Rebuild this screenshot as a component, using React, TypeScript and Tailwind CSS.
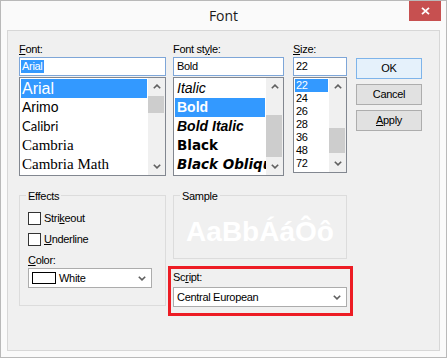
import React from "react";

function Up() {
  return (
    <svg width="8" height="5" viewBox="0 0 8 5" className="block">
      <path d="M0.8 4.3 L4 1.1 L7.2 4.3" fill="none" stroke="#606060" strokeWidth="1.6" />
    </svg>
  );
}
function Down() {
  return (
    <svg width="8" height="5" viewBox="0 0 8 5" className="block">
      <path d="M0.8 0.7 L4 3.9 L7.2 0.7" fill="none" stroke="#606060" strokeWidth="1.6" />
    </svg>
  );
}

function Scrollbar({ thumb }: { thumb: string }) {
  return (
    <div className="w-[17px] h-full flex flex-col bg-[#f0f0f0] shrink-0">
      <div className="h-[17px] shrink-0 flex items-center justify-center">
        <Up />
      </div>
      <div className="flex-1 pt-[1px]">
        <div className={thumb + " bg-[#cdcdcd] mr-[1px]"} />
      </div>
      <div className="h-[17px] shrink-0 flex items-center justify-center">
        <Down />
      </div>
    </div>
  );
}

const fontRows = [
  { t: "Arial", c: "font-['Liberation_Sans',sans-serif] text-[16px]", sel: true },
  { t: "Arimo", c: "font-['Liberation_Sans',sans-serif] text-[14px]" },
  { t: "Calibri", c: "font-['Lato',sans-serif] text-[13px]" },
  { t: "Cambria", c: "font-['Liberation_Serif',serif] text-[15px]" },
  { t: "Cambria Math", c: "font-['Liberation_Serif',serif] text-[15px]" },
];

const styleRows = [
  { t: "Italic", c: "font-['Liberation_Sans',sans-serif] text-[14px] italic" },
  { t: "Bold", c: "font-['Liberation_Sans',sans-serif] text-[14px] font-bold", sel: true },
  { t: "Bold Italic", c: "font-['Liberation_Sans',sans-serif] text-[14px] font-bold italic" },
  { t: "Black", c: "font-['DejaVu_Sans',sans-serif] text-[13.5px] font-bold" },
  { t: "Black Oblique", c: "font-['DejaVu_Sans',sans-serif] text-[13.5px] font-bold italic" },
];

const sizes = ["22", "24", "26", "28", "36", "48", "72"];

function Label({ pre, u, post }: { pre?: string; u: string; post?: string }) {
  return (
    <div className="h-[13px] leading-[13px] whitespace-nowrap">
      {pre}
      <span className="underline underline-offset-[1px]">{u}</span>
      {post}
    </div>
  );
}

export default function App() {
  return (
    <div className="w-[447px] h-[358px] bg-[#fafafa] border border-[#b9b9b9] flex flex-col overflow-hidden font-['Liberation_Sans',Arial,sans-serif] text-[11px] tracking-[-0.3px] text-black">
      {/* title bar */}
      <div className="h-[29px] shrink-0 relative flex items-center justify-center">
        <span className="font-['Open_Sans',sans-serif] text-[14px] tracking-normal text-[#1b1b1b]">Font</span>
        <div className="absolute top-0 right-[5px] w-[32px] h-[20px] bg-[#c75050] flex items-center justify-center">
          <svg width="9" height="8" viewBox="0 0 9 8">
            <path d="M1 0.8 L8 7.2 M8 0.8 L1 7.2" stroke="#fff" strokeWidth="1.8" />
          </svg>
        </div>
      </div>

      {/* client */}
      <div className="mx-[6px] h-[321px] shrink-0 border border-[#d7d7d7] bg-[#f0f0f0] flex flex-col">
        {/* top row */}
        <div className="flex items-start pt-[12px] pl-[11px]">
          {/* Font column */}
          <div className="w-[147px] flex flex-col">
            <Label u="F" post="ont:" />
            <div className="mt-[1px] h-[19px] bg-white border border-[#7ea6d8] flex items-center pl-[1px]">
              <span className="bg-[#3399ff] text-white h-[13px] leading-[13px] px-[1px]">Arial</span>
            </div>
            <div className="mt-[1px] h-[99px] bg-white border border-[#828790] flex overflow-hidden">
              <div className="flex-1 p-[1px] overflow-hidden">
                {fontRows.map((r) => (
                  <div
                    key={r.t}
                    className={
                      "h-[19px] leading-[19px] pl-[1px] whitespace-nowrap tracking-normal " +
                      r.c +
                      (r.sel ? " bg-[#3399ff] text-white" : " text-black")
                    }
                  >
                    {r.t}
                  </div>
                ))}
              </div>
              <Scrollbar thumb="h-[17px]" />
            </div>
          </div>

          {/* Font style column */}
          <div className="w-[111px] ml-[7px] flex flex-col">
            <Label pre="Font st" u="y" post="le:" />
            <div className="mt-[1px] h-[19px] bg-white border border-[#7ea6d8] flex items-center pl-[3px]">
              Bold
            </div>
            <div className="mt-[1px] h-[99px] bg-white border border-[#828790] flex overflow-hidden">
              <div className="flex-1 p-[1px] overflow-hidden">
                {styleRows.map((r) => (
                  <div
                    key={r.t}
                    className={
                      "h-[19px] leading-[19px] pl-[2px] whitespace-nowrap tracking-normal " +
                      r.c +
                      (r.sel ? " bg-[#3399ff] text-white" : " text-black")
                    }
                  >
                    {r.t}
                  </div>
                ))}
              </div>
              <Scrollbar thumb="mt-[19px] h-[42px]" />
            </div>
          </div>

          {/* Size column */}
          <div className="w-[54px] ml-[9px] flex flex-col">
            <Label u="S" post="ize:" />
            <div className="mt-[1px] h-[19px] bg-white border border-[#7ea6d8] flex items-center pl-[2px]">
              22
            </div>
            <div className="mt-[1px] h-[96px] bg-white border border-[#828790] flex overflow-hidden">
              <div className="flex-1 p-[1px] overflow-hidden">
                {sizes.map((s, i) => (
                  <div
                    key={s}
                    className={
                      "h-[13px] leading-[13px] pl-[1px] " +
                      (i === 0 ? "bg-[#3399ff] text-white" : "text-black")
                    }
                  >
                    {s}
                  </div>
                ))}
              </div>
              <Scrollbar thumb="mt-[32px] h-[25px]" />
            </div>
          </div>

          {/* Buttons */}
          <div className="w-[66px] ml-[9px] pt-[15px] flex flex-col gap-[5px]">
            <div className="h-[21px] bg-[#e5f1fb] border border-[#7eb4ea] flex items-center justify-center">
              OK
            </div>
            <div className="h-[21px] bg-[#e1e1e1] border border-[#adadad] flex items-center justify-center">
              Cancel
            </div>
            <div className="h-[21px] bg-[#e1e1e1] border border-[#adadad] flex items-center justify-center">
              <span className="underline underline-offset-[1px]">A</span>pply
            </div>
          </div>
        </div>

        {/* bottom row */}
        <div className="flex items-start mt-[19px] pl-[11px]">
          {/* Effects */}
          <div className="w-[147px] h-[111px] border border-[#dcdcdc] relative pt-[16px] pl-[8px]">
            <div className="absolute left-[6px] top-[-6px] px-[2px] bg-[#f0f0f0] h-[13px] leading-[13px]">
              Effects
            </div>
            <div className="flex items-center h-[13px]">
              <div className="w-[13px] h-[13px] bg-white border border-[#333333]" />
              <div className="ml-[3px] leading-[13px]">
                Stri<span className="underline underline-offset-[1px]">k</span>eout
              </div>
            </div>
            <div className="flex items-center h-[13px] mt-[8px]">
              <div className="w-[13px] h-[13px] bg-white border border-[#333333]" />
              <div className="ml-[3px] leading-[13px]">
                <span className="underline underline-offset-[1px]">U</span>nderline
              </div>
            </div>
            <div className="mt-[8px]">
              <Label u="C" post="olor:" />
            </div>
            <div className="mt-[1px] w-[124px] h-[20px] bg-white border border-[#acacac] flex items-center pl-[3px] pr-[5px]">
              <div className="w-[24px] h-[12px] border border-black bg-white" />
              <span className="ml-[3px] flex-1">White</span>
              <Down />
            </div>
          </div>

          {/* right: Sample + Script */}
          <div className="ml-[2px] w-[185px] flex flex-col">
            <div className="ml-[5px] w-[174px] h-[64px] border border-[#dcdcdc] relative pt-[20px]">
              <div className="absolute left-[6px] top-[-6px] px-[2px] bg-[#f0f0f0] h-[13px] leading-[13px]">
                Sample
              </div>
              <div className="text-center text-white font-bold text-[28px] leading-[32px] tracking-normal">
                AaBbÁáÔô
              </div>
            </div>
            <div className="mt-[7px] h-[50px] border-[3px] border-[#ed1c24] pt-[2px] pl-[2px]">
              <Label pre="Sc" u="r" post="ipt:" />
              <div className="mt-[3px] w-[174px] h-[20px] bg-white border border-[#acacac] flex items-center pl-[3px] pr-[5px]">
                <span className="flex-1">Central European</span>
                <Down />
              </div>
            </div>
          </div>
        </div>
      </div>
    </div>
  );
}
